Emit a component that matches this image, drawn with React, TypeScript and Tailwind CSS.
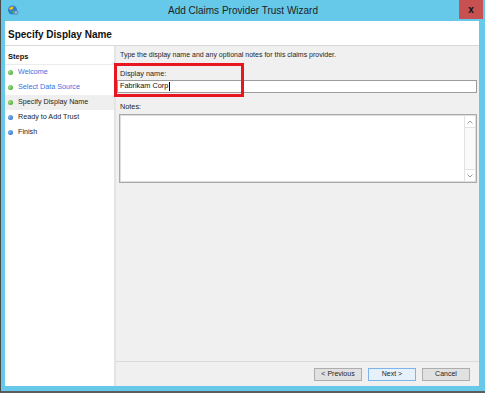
const steps = [
  { label: "Welcome", done: true, link: true },
  { label: "Select Data Source", done: true, link: true },
  { label: "Specify Display Name", done: true, link: false, current: true },
  { label: "Ready to Add Trust", done: false, link: false },
  { label: "Finish", done: false, link: false },
];

const TitleIcon = () => (
  <svg width="12" height="12" viewBox="0 0 12 12">
    <circle cx="5.5" cy="6" r="4.5" fill="#2f7fd0" />
    <path d="M2 4.5 Q4 2 6.5 2.5 L6 5 L3.5 6 Z" fill="#f2c21b" />
    <path d="M5 7 L8.5 6.5 L9.5 9 L6 10.5 Z" fill="#53b848" />
    <circle cx="9" cy="8.5" r="2" fill="#8fb7e0" stroke="#3d6fa8" strokeWidth="0.6" />
  </svg>
);

const Dot = ({ done }: { done: boolean }) => (
  <span
    className={
      done
        ? "w-[5px] h-[5px] rounded-full bg-[radial-gradient(circle_at_35%_35%,#9be27a,#3b9a2b)]"
        : "w-[5px] h-[5px] rounded-full bg-[radial-gradient(circle_at_35%_35%,#7fbaf2,#1d63c9)]"
    }
  />
);

const Chevron = ({ up }: { up?: boolean }) => (
  <svg width="6" height="4" viewBox="0 0 6 4">
    <path
      d={up ? "M0.5 3.5 L3 1 L5.5 3.5" : "M0.5 0.5 L3 3 L5.5 0.5"}
      fill="none"
      stroke="#9a9a9a"
      strokeWidth="1"
    />
  </svg>
);

const WizardButton = ({ label, primary }: { label: string; primary?: boolean }) => (
  <div
    className={
      primary
        ? "w-[48px] h-[13px] flex items-center justify-center border border-[#7eb4ea] bg-[#e5f1fb] text-[7px] text-[#1e1e1e]"
        : "w-[48px] h-[13px] flex items-center justify-center border border-[#adadad] bg-[#e1e1e1] text-[7px] text-[#1e1e1e]"
    }
  >
    {label}
  </div>
);

export default function App() {
  return (
    <div className="relative w-[485px] h-[393px] bg-[#66c9ea] border-l border-[#4a4a4a] border-b-2 border-b-[#5c5c5c] flex flex-col overflow-hidden font-['Liberation_Sans',Arial,sans-serif]">
      <div className="h-[21px] shrink-0 grid grid-cols-[1fr_auto_1fr] items-start">
        <div className="pl-[6px] pt-[4px]">
          <TitleIcon />
        </div>
        <div className="pt-[5px] text-[10px] leading-[12px] text-[#1e1e1e]">
          Add Claims Provider Trust Wizard
        </div>
        <div className="flex justify-end pr-[2px]">
          <div className="w-[24px] h-[19px] bg-[#c75050] flex items-center justify-center text-[10px] font-bold text-[#111] leading-none">
            x
          </div>
        </div>
      </div>

      <div className="ml-[4px] mr-[6px] mb-[5px] flex-1 flex flex-col bg-white">
        <div className="h-[25px] shrink-0 flex items-center pl-[3px] pt-[2px] border-b border-[#d9d9d9] text-[10px] font-bold text-[#111]">
          Specify Display Name
        </div>

        <div className="flex-1 flex">
          <div className="w-[111px] shrink-0 bg-white border-r-2 border-[#e4e4e4] pt-[4px]">
            <div className="h-[15px] flex items-center pl-[3px] text-[7.5px] font-bold text-[#111] border-b border-[#ececec]">
              Steps
            </div>
            {steps.map((s) => (
              <div
                key={s.label}
                className={
                  s.current
                    ? "h-[15px] flex items-center pl-[3px] gap-[5px] bg-[#efefef]"
                    : "h-[15px] flex items-center pl-[3px] gap-[5px]"
                }
              >
                <Dot done={s.done} />
                <span
                  className={
                    s.link
                      ? "text-[7.2px] text-[#3a6fe0]"
                      : "text-[7.2px] text-[#1e1e1e]"
                  }
                >
                  {s.label}
                </span>
              </div>
            ))}
          </div>

          <div className="flex-1 flex flex-col bg-[#f0f0f0]">
            <div className="flex-1 flex flex-col pl-[1px] pr-[2px] pt-[4px]">
              <div className="pl-[3px] text-[7px] leading-[9px] text-[#1e1e1e]">
                Type the display name and any optional notes for this claims provider.
              </div>
              <div className="pl-[3px] mt-[10px] text-[7.3px] leading-[9px] text-[#1e1e1e]">
                Display name:
              </div>
              <div className="mt-[2px] h-[13px] bg-white border border-[#9c9c9c] flex items-center pl-[2px]">
                <span className="text-[7.3px] text-[#111]">Fabrikam Corp</span>
                <span className="w-px h-[9px] bg-black ml-[1px]" />
              </div>
              <div className="pl-[3px] mt-[9px] text-[7.3px] leading-[9px] text-[#1e1e1e]">
                Notes:
              </div>
              <div className="ml-[2px] mt-[3px] h-[69px] bg-white border border-[#a9a9a9] shadow-[inset_0_0_0_1px_#dedede] flex justify-end p-[1px]">
                <div className="w-[11px] flex flex-col border-l border-[#e2e2e2] bg-[#fafafa]">
                  <div className="h-[12px] flex items-center justify-center border-b border-[#e2e2e2] bg-white">
                    <Chevron up />
                  </div>
                  <div className="flex-1" />
                  <div className="h-[12px] flex items-center justify-center border-t border-[#e2e2e2] bg-white">
                    <Chevron />
                  </div>
                </div>
              </div>
            </div>

            <div className="h-[25px] shrink-0 border-t border-[#dadada] flex items-center justify-end gap-[6px] pr-[9px]">
              <WizardButton label="< Previous" />
              <WizardButton label="Next >" primary />
              <WizardButton label="Cancel" />
            </div>
          </div>
        </div>
      </div>

      <div className="absolute left-[113px] top-[63px] w-[130px] h-[34px] border-[3px] border-[#e8161e]" />
    </div>
  );
}
